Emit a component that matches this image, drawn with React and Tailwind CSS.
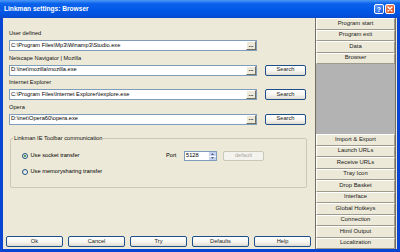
import React from "react";

const paths = [
  { label: "User defined", value: "C:\\Program Files\\Mp3\\Winamp3\\Studio.exe", search: false },
  { label: "Netscape Navigator | Mozilla", value: "D:\\inet\\mozilla\\mozilla.exe", search: true },
  { label: "Internet Explorer", value: "C:\\Program Files\\Internet Explorer\\iexplore.exe", search: true },
  { label: "Opera", value: "D:\\inet\\Opera60\\opera.exe", search: true },
];

const topNav = ["Program start", "Program exit", "Data", "Browser"];
const bottomNav = [
  "Import & Export",
  "Launch URLs",
  "Receive URLs",
  "Tray Icon",
  "Drop Basket",
  "Interface",
  "Global Hotkeys",
  "Connection",
  "Html Output",
  "Localization",
];

function XpButton({ children, className = "" }) {
  return (
    <div
      className={
        "flex items-center justify-center border border-[#1d4f8a] rounded-[2px] bg-[linear-gradient(to_bottom,#ffffff_0%,#f6f5f0_55%,#dedbd0_100%)] text-[#1a1a1a] " +
        className
      }
    >
      {children}
    </div>
  );
}

function NavItem({ label }) {
  return (
    <div className="flex-1 flex items-center justify-center bg-[#ece9d8] border-t border-l border-t-white border-l-white border-b border-r border-b-[#9d9a8c] border-r-[#9d9a8c] text-[5.9px] text-[#1a1a1a]">
      {label}
    </div>
  );
}

function PathRow({ label, value, search }) {
  return (
    <div className="flex flex-col">
      <div className="h-[8px] flex items-center text-[#111]">{label}</div>
      <div className="mt-[2px] flex items-center">
        <div className="w-[248px] h-[11px] flex items-center border border-[#7f9db9] bg-white">
          <span className="flex-1 pl-[1px] whitespace-nowrap overflow-hidden">{value}</span>
          <div className="w-[10px] h-[9px] flex items-center justify-center bg-[#ece9d8] border border-t-white border-l-white border-b-[#716f64] border-r-[#716f64] text-[6px] font-bold leading-none pb-[2px]">
            ...
          </div>
        </div>
        {search && <XpButton className="ml-[8px] w-[41px] h-[11px]">Search</XpButton>}
      </div>
    </div>
  );
}

function Radio({ checked }) {
  return (
    <div className="w-[6px] h-[6px] rounded-full border border-[#1c5180] bg-[linear-gradient(135deg,#dcdcd6,#ffffff)] flex items-center justify-center">
      {checked && <div className="w-[2px] h-[2px] rounded-full bg-[#2a8a2a]" />}
    </div>
  );
}

export default function App() {
  return (
    <div className="w-[400px] h-[252px] flex flex-col bg-[#0845d2] overflow-hidden font-[family-name:Liberation_Sans,Arial,sans-serif] text-[5.7px] leading-none text-black">
      {/* Title bar */}
      <div className="h-[18px] flex items-center pl-[4px] pr-[5px] bg-[linear-gradient(to_bottom,#4d98f7_0%,#0b63ec_20%,#0058e6_55%,#0051dd_85%,#0a47c8_100%)]">
        <span className="flex-1 text-white font-bold text-[6.6px]">Linkman settings: Browser</span>
        <div className="flex gap-[1px]">
          <div className="w-[10px] h-[10px] rounded-[2px] border border-white bg-[linear-gradient(135deg,#5f9cf7,#1656e0)] flex items-center justify-center text-white font-bold text-[7px]">
            ?
          </div>
          <div className="w-[10px] h-[10px] rounded-[2px] border border-white bg-[linear-gradient(135deg,#ef8a62,#d2421c)] flex items-center justify-center">
            <svg width="6" height="6" viewBox="0 0 6 6">
              <path d="M1 1 L5 5 M5 1 L1 5" stroke="white" strokeWidth="1.3" strokeLinecap="round" />
            </svg>
          </div>
        </div>
      </div>

      {/* Body */}
      <div className="flex-1 flex mx-[3px] mb-[3px] bg-[#ece9d8]">
        {/* Left */}
        <div className="w-[312px] flex flex-col">
          <div className="flex flex-col gap-[3.5px] pt-[12px] pl-[6px]">
            {paths.map((p) => (
              <PathRow key={p.label} {...p} />
            ))}
          </div>

          <fieldset className="mt-[9.5px] ml-[7px] w-[297px] h-[54px] border border-[#cbc8b8] rounded-[2px]">
            <legend className="ml-[2px] px-[1px] h-[8px] leading-[8px] text-[#111]">Linkman IE Toolbar communication</legend>
            <div className="flex items-center pl-[11px] mt-[9px] h-[10px]">
              <div className="w-[144px] flex items-center">
                <Radio checked />
                <span className="ml-[2.5px]">Use socket transfer</span>
              </div>
              <span className="w-[18px]">Port</span>
              <div className="w-[33px] h-[10px] border border-[#7f9db9] bg-white flex items-center">
                <span className="flex-1 pl-[1px]">5128</span>
                <div className="w-[7px] h-[8px] flex flex-col mr-[0.5px]">
                  <div className="flex-1 flex items-center justify-center bg-[#c6d3f0] border-b border-b-white">
                    <svg width="3" height="2" viewBox="0 0 3 2"><path d="M0 2 L1.5 0 L3 2 Z" fill="#4d6185" /></svg>
                  </div>
                  <div className="flex-1 flex items-center justify-center bg-[#c6d3f0]">
                    <svg width="3" height="2" viewBox="0 0 3 2"><path d="M0 0 L1.5 2 L3 0 Z" fill="#4d6185" /></svg>
                  </div>
                </div>
              </div>
              <div className="ml-[6px] w-[41px] h-[10px] border border-[#c9c7ba] rounded-[2px] bg-[#f4f3ee] flex items-center justify-center text-[#aca899]">
                default
              </div>
            </div>
            <div className="flex items-center pl-[11px] mt-[7px] h-[8px]">
              <Radio />
              <span className="ml-[2.5px]">Use memorysharing transfer</span>
            </div>
          </fieldset>

          <div className="flex-1" />
          <div className="flex gap-[5px] pl-[3px] mb-[2px]">
            {["Ok", "Cancel", "Try", "Defaults", "Help"].map((b) => (
              <XpButton key={b} className="w-[57px] h-[11px]">
                {b}
              </XpButton>
            ))}
          </div>
        </div>

        {/* Right nav panel */}
        <div className="w-[81px] flex flex-col border-l border-l-[#716f64] border-r border-r-[#716f64]">
          <div className="h-[46px] flex flex-col">
            {topNav.map((n) => (
              <NavItem key={n} label={n} />
            ))}
          </div>
          <div className="flex-1 bg-[#b3b3b3]" />
          <div className="h-[115px] flex flex-col">
            {bottomNav.map((n) => (
              <NavItem key={n} label={n} />
            ))}
          </div>
        </div>
        <div className="w-[1px]" />
      </div>
    </div>
  );
}
